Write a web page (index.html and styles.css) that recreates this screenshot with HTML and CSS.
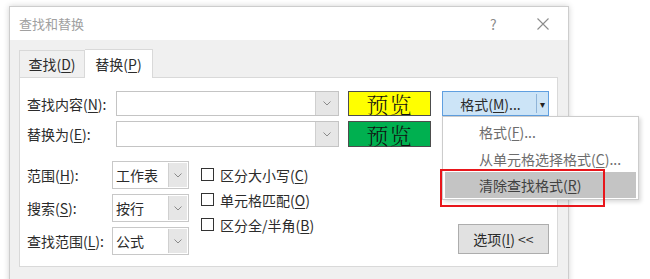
FILE: index.html
```html
<!DOCTYPE html>
<html lang="zh-CN">
<head>
  <meta charset="UTF-8">
  <title>查找和替换</title>
  <link rel="stylesheet" href="styles.css">
</head>
<body>
  <div class="dialog">
    <div class="titlebar">
      <span class="title">查找和替换</span>
      <span class="help">?</span>
      <span class="close">
        <svg width="12" height="12" viewBox="0 0 12 12"><path d="M0.5 0.5L11.5 11.5M11.5 0.5L0.5 11.5" stroke="#8c8c8c" stroke-width="1.1" fill="none"/></svg>
      </span>
    </div>

    <div class="main">
      <div class="tabs">
        <div class="tab">查找(<u>D</u>)</div>
        <div class="tab active">替换(<u>P</u>)</div>
      </div>

      <div class="panel">
        <div class="row">
          <label class="label">查找内容(<u>N</u>):</label>
          <div class="combo">
            <span class="field"></span>
            <span class="drop"><svg width="8" height="5" viewBox="0 0 8 5"><polyline points="0.5,0.5 4,4 7.5,0.5" fill="none" stroke="#8a8a8a"/></svg></span>
          </div>
          <div class="preview yellow">预览</div>
          <div class="format-btn">
            <span class="format-main">格式(<u>M</u>)...</span>
            <span class="format-arrow">▾</span>
          </div>
        </div>
        <div class="row row-second">
          <label class="label">替换为(<u>E</u>):</label>
          <div class="combo">
            <span class="field"></span>
            <span class="drop"><svg width="8" height="5" viewBox="0 0 8 5"><polyline points="0.5,0.5 4,4 7.5,0.5" fill="none" stroke="#8a8a8a"/></svg></span>
          </div>
          <div class="preview green">预览</div>
        </div>

        <div class="options">
          <div class="selects">
            <div class="sel-row">
              <label class="sel-label">范围(<u>H</u>):</label>
              <div class="select"><span class="value">工作表</span><span class="sdrop"><svg width="8" height="5" viewBox="0 0 8 5"><polyline points="0.5,0.5 4,4 7.5,0.5" fill="none" stroke="#8a8a8a"/></svg></span></div>
            </div>
            <div class="sel-row">
              <label class="sel-label">搜索(<u>S</u>):</label>
              <div class="select"><span class="value">按行</span><span class="sdrop"><svg width="8" height="5" viewBox="0 0 8 5"><polyline points="0.5,0.5 4,4 7.5,0.5" fill="none" stroke="#8a8a8a"/></svg></span></div>
            </div>
            <div class="sel-row">
              <label class="sel-label">查找范围(<u>L</u>):</label>
              <div class="select"><span class="value">公式</span><span class="sdrop"><svg width="8" height="5" viewBox="0 0 8 5"><polyline points="0.5,0.5 4,4 7.5,0.5" fill="none" stroke="#8a8a8a"/></svg></span></div>
            </div>
          </div>

          <div class="checks">
            <div class="check"><span class="box"></span>区分大小写(<u>C</u>)</div>
            <div class="check"><span class="box"></span>单元格匹配(<u>O</u>)</div>
            <div class="check"><span class="box"></span>区分全/半角(<u>B</u>)</div>
          </div>

          <div class="options-btn">选项(<u>I</u>) &lt;&lt;</div>
        </div>
      </div>
    </div>
  </div>

  <div class="menu">
    <div class="menu-item">格式(<u>F</u>)...</div>
    <div class="menu-item">从单元格选择格式(<u>C</u>)...</div>
    <div class="menu-item hover">清除查找格式(<u>R</u>)</div>
  </div>
  <div class="highlight"></div>
</body>
</html>
```

FILE: styles.css
```css
body {
  margin: 0;
  font-family: "Noto Sans CJK SC", "Noto Sans", sans-serif;
  font-size: 14px;
  color: #2b2b2b;
  background: #fff;
}
u {
  text-decoration: underline;
  text-underline-offset: 2px;
}
.dialog {
  margin: 6px 0 0 9px;
  width: 558px;
  border: 1px solid #cdcdcd;
  background: #f0f0f0;
  box-shadow: 0 0 6px rgba(0,0,0,0.18);
}
.titlebar {
  height: 33px;
  background: #fff;
  display: flex;
  align-items: center;
  padding-left: 9px;
  color: #a0a0a0;
  font-size: 13px;
}
.title {
  flex: 1;
}
.help {
  width: 14px;
  color: #8c8c8c;
  font-size: 14px;
  margin-right: 33px;
}
.close {
  display: flex;
  margin-right: 19px;
}
.main {
  padding: 9px 10px 20px 9px;
}
.tabs {
  display: flex;
  align-items: flex-end;
  height: 28px;
}
.tab {
  width: 66px;
  height: 27px;
  box-sizing: border-box;
  border: 1px solid #d9d9d9;
  border-bottom: none;
  display: flex;
  align-items: center;
  justify-content: center;
  line-height: 1;
}
.tab.active {
  width: 68px;
  height: 29px;
  background: #fff;
  margin-bottom: -1px;
  border-left: none;
  position: relative;
  z-index: 1;
}
.panel {
  background: #fff;
  border: 1px solid #d9d9d9;
  padding: 13px 8px 11px 7px;
}
.row {
  display: flex;
  align-items: center;
  height: 25px;
}
.row-second {
  margin-top: 5px;
  height: 26px;
}
.label {
  width: 89px;
  line-height: 1;
}
.combo {
  width: 223px;
  height: 100%;
  box-sizing: border-box;
  border: 1px solid #c4c4c4;
  display: flex;
}
.field {
  flex: 1;
}
.drop {
  width: 22px;
  background: #e6e6e6;
  border-left: 1px solid #cfcfcf;
  display: flex;
  align-items: center;
  justify-content: center;
}
.preview {
  margin-left: 9px;
  width: 83px;
  height: 100%;
  box-sizing: border-box;
  border: 1px solid #4d4d4d;
  display: flex;
  align-items: center;
  justify-content: center;
  font-family: "Noto Serif CJK SC", "Noto Sans CJK SC", serif;
  font-size: 22px;
  font-weight: 300;
  color: #111;
  letter-spacing: 1px;
}
.yellow {
  background: #ffff00;
}
.green {
  background: #00b050;
}
.format-btn {
  margin-left: 11px;
  width: 107px;
  height: 100%;
  box-sizing: border-box;
  background: #cce4f7;
  border: 1px solid #5f9fe0;
  display: flex;
  align-items: stretch;
}
.format-main {
  flex: 1;
  display: flex;
  align-items: center;
  justify-content: center;
  border-right: 1px solid #8fb4d8;
  margin: 2px 0;
  padding-left: 2px;
  line-height: 1;
}
.format-arrow {
  width: 11px;
  display: flex;
  align-items: center;
  justify-content: center;
  font-size: 10px;
  color: #222;
}
.options {
  display: flex;
  margin-top: 14px;
}
.selects {
  display: flex;
  flex-direction: column;
  gap: 5px;
}
.sel-row {
  display: flex;
  align-items: center;
  height: 28px;
}
.sel-label {
  width: 85px;
  line-height: 1;
}
.select {
  width: 77px;
  height: 100%;
  box-sizing: border-box;
  border: 1px solid #c8c8c8;
  display: flex;
}
.value {
  flex: 1;
  padding-left: 3px;
  display: flex;
  align-items: center;
  line-height: 1;
}
.sdrop {
  width: 18px;
  margin: 1px;
  background: #e6e6e6;
  border-left: 1px solid #d0d0d0;
  display: flex;
  align-items: center;
  justify-content: center;
}
.checks {
  margin-left: 12px;
  padding-top: 1px;
  display: flex;
  flex-direction: column;
}
.check {
  height: 25px;
  display: flex;
  align-items: center;
  line-height: 1;
}
.box {
  width: 13px;
  height: 13px;
  box-sizing: border-box;
  border: 1px solid #333;
  background: #fff;
  margin-right: 6px;
}
.options-btn {
  margin-left: auto;
  align-self: flex-end;
  margin-bottom: 1px;
  width: 91px;
  height: 30px;
  box-sizing: border-box;
  background: #e1e1e1;
  border: 1px solid #adadad;
  display: flex;
  align-items: center;
  justify-content: center;
  line-height: 1;
}
.menu {
  position: absolute;
  left: 442px;
  top: 116px;
  width: 197px;
  height: 84px;
  box-sizing: border-box;
  background: #fff;
  border: 1px solid #cccccc;
  box-shadow: 2px 2px 4px rgba(0,0,0,0.15);
  padding-top: 1px;
}
.menu-item {
  height: 27px;
  display: flex;
  align-items: center;
  padding-left: 36px;
  color: #6d6d6d;
  line-height: 1;
}
.menu-item.hover {
  height: 26px;
  margin: 0 2px;
  padding-left: 34px;
  background: #c4c4c4;
  color: #404040;
}
.highlight {
  position: absolute;
  left: 440px;
  top: 169px;
  width: 165px;
  height: 38px;
  box-sizing: border-box;
  border: 2px solid #e8161b;
}
```
